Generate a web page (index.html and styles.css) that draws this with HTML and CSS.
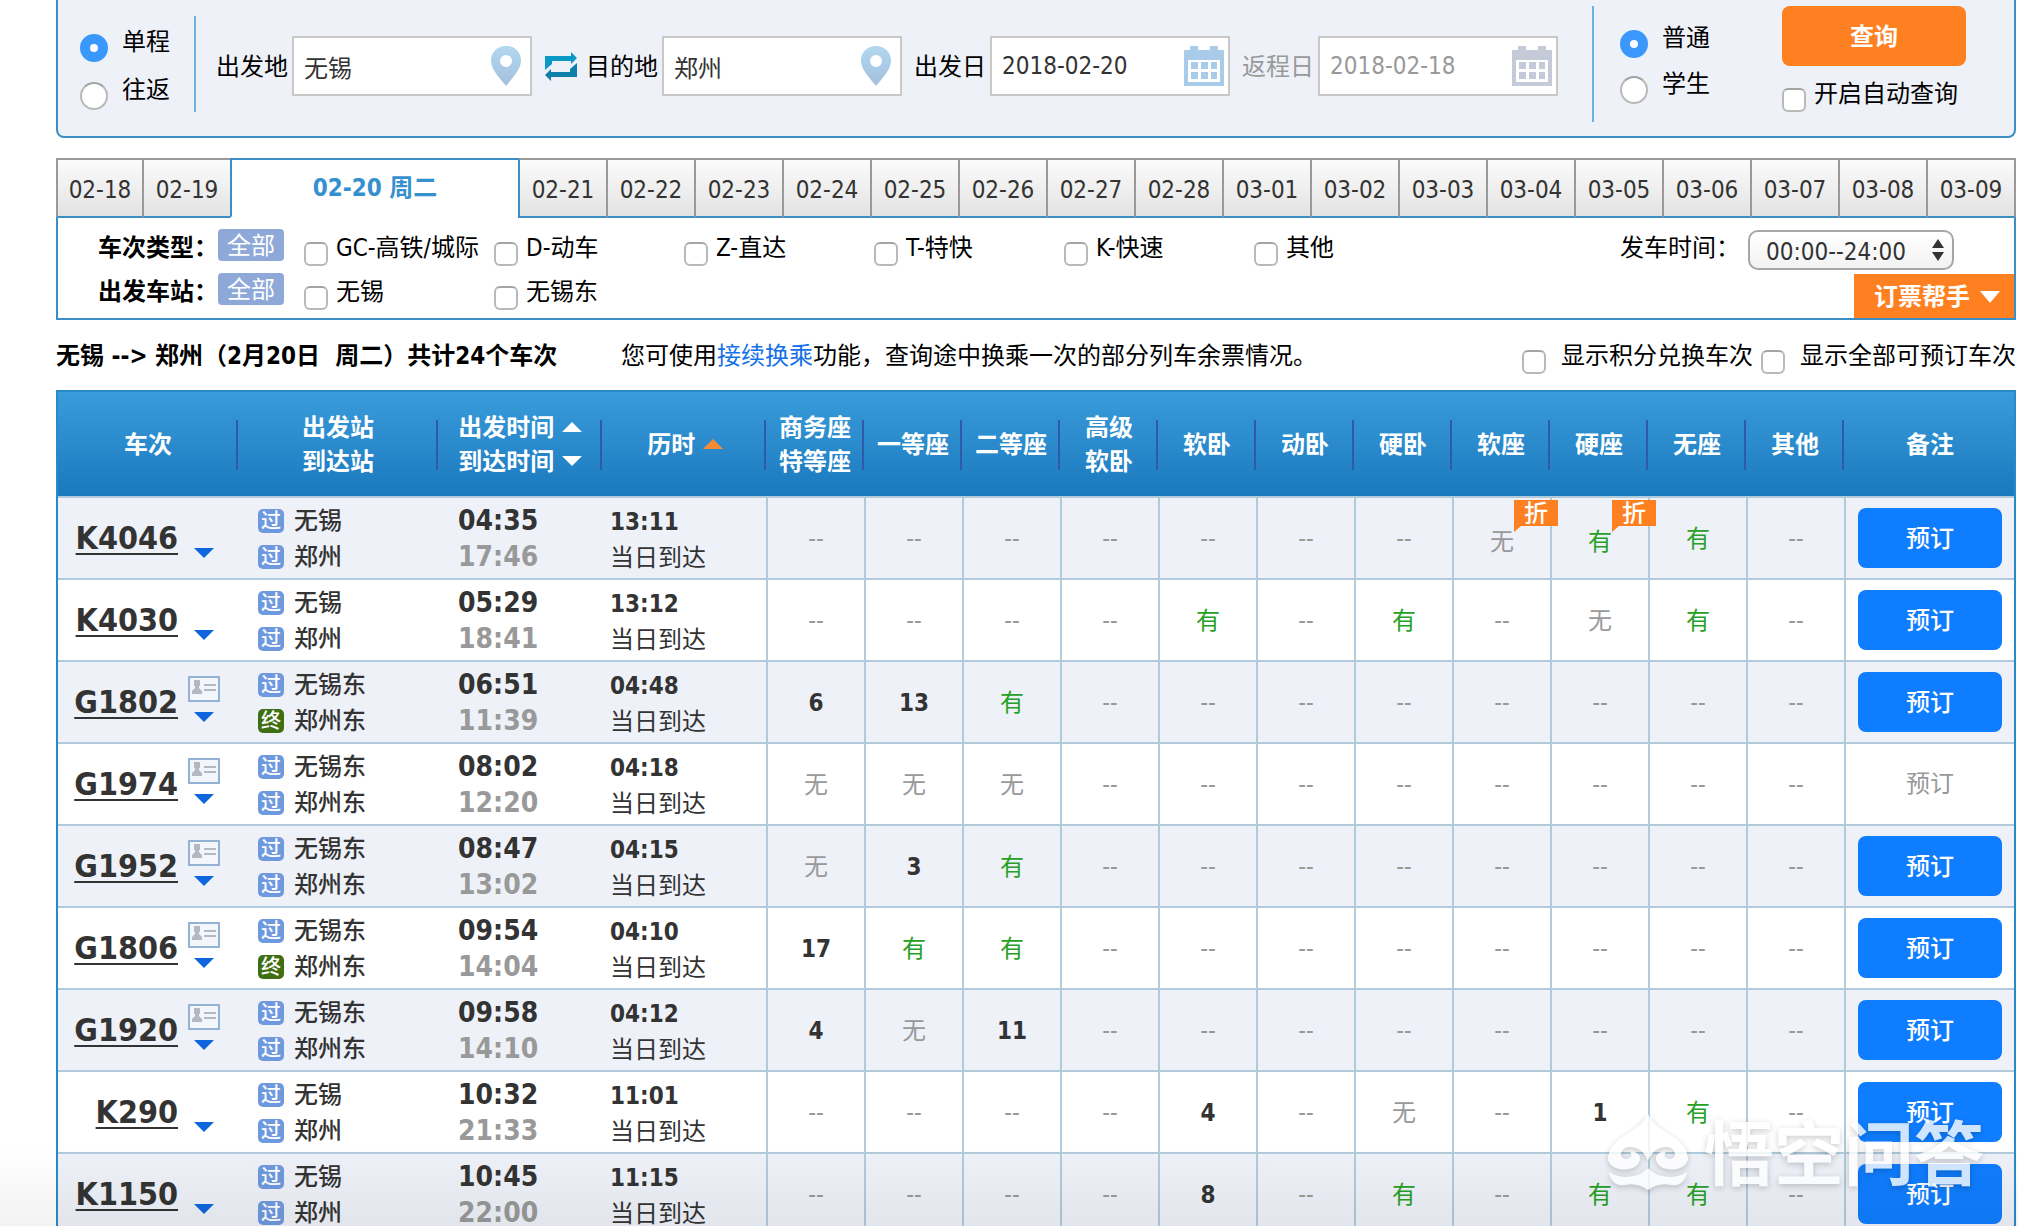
FILE: index.html
```html
<!DOCTYPE html>
<html lang="zh-CN">
<head>
<meta charset="utf-8">
<title>车票预订</title>
<link rel="stylesheet" href="styles.css">
</head>
<body>
<svg class="sprite" aria-hidden="true">
  <symbol id="pin" viewBox="0 0 32 40"><path fill="url(#tint)" fill-rule="evenodd" d="M16 0C7 0 1 6.500 1 14.500C1 22 6 28 16 40C26 28 31 22 31 14.500C31 6.500 25 0 16 0ZM16 9a6 6 0 1 1 0 12a6 6 0 1 1 0-12Z"/></symbol>
  <symbol id="calendar" viewBox="0 0 40 40"><path fill="currentColor" d="M0 4H6V0H14V4H26V0H34V4H40V40H0Z"/><path fill="#fff" d="M4 14H36V36H4Z"/><path fill="currentColor" d="M7 16h7v7H7zM17 16h7v7h-7zM27 16h6v7h-6zM7 26h7v7H7zM17 26h7v7h-7zM27 26h6v7h-6z"/></symbol>
  <symbol id="card" viewBox="0 0 32 26"><path fill="#f3f7fc" stroke="#94b2d6" stroke-width="2" d="M1 1H31V25H1Z"/><path fill="#b4b8c2" d="M6 4H12V10H11V12L14 15V18H4V15L7 12V10H6ZM16 8H28V10H16ZM16 13H28V15H16Z"/></symbol>
  <symbol id="down" viewBox="0 0 20 10"><path fill="currentColor" d="M0 0H20L10 10Z"/></symbol>
  <symbol id="up" viewBox="0 0 20 10"><path fill="currentColor" d="M0 10H20L10 0Z"/></symbol>
  <defs><linearGradient id="tint" x1="0" y1="0" x2="0" y2="1"><stop offset="0" stop-color="#b2d8f0"/><stop offset="1" stop-color="#a3bfdc"/></linearGradient></defs>
</svg>
<main class="page">
  <form class="search">
    <div class="choices trip">
      <label class="choice"><input type="radio" name="trip" checked>单程</label>
      <label class="choice"><input type="radio" name="trip">往返</label>
    </div>
    <div class="fields">
      <label for="from">出发地</label>
      <div class="field"><input id="from" type="text" value="无锡"><svg class="pin"><use href="#pin"/></svg></div>
      <button class="swap" type="button" aria-label="交换"><svg viewBox="0 0 32 30"><path fill="#0b9ac8" d="M0 5H26V1L32 7L26 13V10H7V13L0 19Z"/><path fill="#0d7fa8" d="M32 26H6V30L0 24L6 18V21H25V18L32 12Z"/></svg></button>
      <label for="to">目的地</label>
      <div class="field"><input id="to" type="text" value="郑州"><svg class="pin"><use href="#pin"/></svg></div>
      <label for="go" class="dated">出发日</label>
      <div class="field"><input id="go" type="text" value="2018-02-20"><svg class="cal"><use href="#calendar"/></svg></div>
      <label for="back" class="dated off">返程日</label>
      <div class="field off"><input id="back" type="text" value="2018-02-18"><svg class="cal"><use href="#calendar"/></svg></div>
    </div>
    <div class="choices kind">
      <label class="choice"><input type="radio" name="kind" checked>普通</label>
      <label class="choice"><input type="radio" name="kind">学生</label>
    </div>
    <div class="submit">
      <button class="query" type="button">查询</button>
      <label class="choice"><input type="checkbox">开启自动查询</label>
    </div>
  </form>

  <nav class="days">
    <a href="#">02-18</a><a href="#">02-19</a><a href="#" class="active">02-20 周二</a><a href="#">02-21</a><a href="#">02-22</a><a href="#">02-23</a><a href="#">02-24</a><a href="#">02-25</a><a href="#">02-26</a><a href="#">02-27</a><a href="#">02-28</a><a href="#">03-01</a><a href="#">03-02</a><a href="#">03-03</a><a href="#">03-04</a><a href="#">03-05</a><a href="#">03-06</a><a href="#">03-07</a><a href="#">03-08</a><a href="#">03-09</a>
  </nav>

  <section class="filters">
    <div class="filter-rows">
      <div class="filter"><strong>车次类型：</strong><button type="button" class="all">全部</button>
        <label class="choice"><input type="checkbox">GC-高铁/城际</label><label class="choice"><input type="checkbox">D-动车</label><label class="choice"><input type="checkbox">Z-直达</label><label class="choice"><input type="checkbox">T-特快</label><label class="choice"><input type="checkbox">K-快速</label><label class="choice"><input type="checkbox">其他</label></div>
      <div class="filter"><strong>出发车站：</strong><button type="button" class="all">全部</button>
        <label class="choice"><input type="checkbox">无锡</label><label class="choice"><input type="checkbox">无锡东</label></div>
    </div>
    <div class="side">
      <div class="hours"><label for="hours">发车时间：</label>
        <div class="picker"><select id="hours"><option>00:00--24:00</option></select><svg viewBox="0 0 12 22"><path fill="#333" d="M0 9L6 0L12 9ZM0 13H12L6 22Z"/></svg></div></div>
      <button type="button" class="helper">订票帮手<svg viewBox="0 0 20 12"><path fill="#fff" d="M0 0H20L10 12Z"/></svg></button>
    </div>
  </section>

  <div class="summary">
    <strong>无锡 --&gt; 郑州（2月20日&nbsp; 周二）共计24个车次</strong>
    <p>您可使用<a href="#">接续换乘</a>功能，查询途中换乘一次的部分列车余票情况。</p>
    <div class="toggles"><label class="choice"><input type="checkbox">显示积分兑换车次</label><label class="choice"><input type="checkbox">显示全部可预订车次</label></div>
  </div>

  <table class="trains">
    <colgroup><col class="c-train"><col class="c-station"><col class="c-time"><col class="c-span"><col span="11"><col class="c-book"></colgroup>
    <thead><tr>
      <th>车次</th><th>出发站<br>到达站</th><th>出发时间 <svg class="sort"><use href="#up"/></svg><br>到达时间 <svg class="sort"><use href="#down"/></svg></th><th>历时 <svg class="sort hot"><use href="#up"/></svg></th>
      <th>商务座<br>特等座</th><th>一等座</th><th>二等座</th><th>高级<br>软卧</th><th>软卧</th><th>动卧</th><th>硬卧</th><th>软座</th><th>硬座</th><th>无座</th><th>其他</th><th>备注</th>
    </tr></thead>
    <tbody>
      <tr>
        <td><div class="train"><a href="#">K4046</a><span class="tools"><svg class="more"><use href="#down"/></svg></span></div></td>
        <td><div class="station"><i>过</i>无锡</div><div class="station"><i>过</i>郑州</div></td>
        <td class="time"><b>04:35</b><b class="end">17:46</b></td>
        <td class="span"><b>13:11</b><span>当日到达</span></td>
        <td>--</td><td>--</td><td>--</td><td>--</td><td>--</td><td>--</td><td>--</td><td class="deal">无<span class="tag">折</span></td><td class="deal yes">有<span class="tag">折</span></td><td class="yes">有</td><td>--</td>
        <td><button type="button" class="book">预订</button></td>
      </tr>
      <tr>
        <td><div class="train"><a href="#">K4030</a><span class="tools"><svg class="more"><use href="#down"/></svg></span></div></td>
        <td><div class="station"><i>过</i>无锡</div><div class="station"><i>过</i>郑州</div></td>
        <td class="time"><b>05:29</b><b class="end">18:41</b></td>
        <td class="span"><b>13:12</b><span>当日到达</span></td>
        <td>--</td><td>--</td><td>--</td><td>--</td><td class="yes">有</td><td>--</td><td class="yes">有</td><td>--</td><td>无</td><td class="yes">有</td><td>--</td>
        <td><button type="button" class="book">预订</button></td>
      </tr>
      <tr>
        <td><div class="train"><a href="#">G1802</a><span class="tools"><svg class="card"><use href="#card"/></svg><svg class="more"><use href="#down"/></svg></span></div></td>
        <td><div class="station"><i>过</i>无锡东</div><div class="station"><i class="last">终</i>郑州东</div></td>
        <td class="time"><b>06:51</b><b class="end">11:39</b></td>
        <td class="span"><b>04:48</b><span>当日到达</span></td>
        <td class="num">6</td><td class="num">13</td><td class="yes">有</td><td>--</td><td>--</td><td>--</td><td>--</td><td>--</td><td>--</td><td>--</td><td>--</td>
        <td><button type="button" class="book">预订</button></td>
      </tr>
      <tr>
        <td><div class="train"><a href="#">G1974</a><span class="tools"><svg class="card"><use href="#card"/></svg><svg class="more"><use href="#down"/></svg></span></div></td>
        <td><div class="station"><i>过</i>无锡东</div><div class="station"><i>过</i>郑州东</div></td>
        <td class="time"><b>08:02</b><b class="end">12:20</b></td>
        <td class="span"><b>04:18</b><span>当日到达</span></td>
        <td>无</td><td>无</td><td>无</td><td>--</td><td>--</td><td>--</td><td>--</td><td>--</td><td>--</td><td>--</td><td>--</td>
        <td>预订</td>
      </tr>
      <tr>
        <td><div class="train"><a href="#">G1952</a><span class="tools"><svg class="card"><use href="#card"/></svg><svg class="more"><use href="#down"/></svg></span></div></td>
        <td><div class="station"><i>过</i>无锡东</div><div class="station"><i>过</i>郑州东</div></td>
        <td class="time"><b>08:47</b><b class="end">13:02</b></td>
        <td class="span"><b>04:15</b><span>当日到达</span></td>
        <td>无</td><td class="num">3</td><td class="yes">有</td><td>--</td><td>--</td><td>--</td><td>--</td><td>--</td><td>--</td><td>--</td><td>--</td>
        <td><button type="button" class="book">预订</button></td>
      </tr>
      <tr>
        <td><div class="train"><a href="#">G1806</a><span class="tools"><svg class="card"><use href="#card"/></svg><svg class="more"><use href="#down"/></svg></span></div></td>
        <td><div class="station"><i>过</i>无锡东</div><div class="station"><i class="last">终</i>郑州东</div></td>
        <td class="time"><b>09:54</b><b class="end">14:04</b></td>
        <td class="span"><b>04:10</b><span>当日到达</span></td>
        <td class="num">17</td><td class="yes">有</td><td class="yes">有</td><td>--</td><td>--</td><td>--</td><td>--</td><td>--</td><td>--</td><td>--</td><td>--</td>
        <td><button type="button" class="book">预订</button></td>
      </tr>
      <tr>
        <td><div class="train"><a href="#">G1920</a><span class="tools"><svg class="card"><use href="#card"/></svg><svg class="more"><use href="#down"/></svg></span></div></td>
        <td><div class="station"><i>过</i>无锡东</div><div class="station"><i>过</i>郑州东</div></td>
        <td class="time"><b>09:58</b><b class="end">14:10</b></td>
        <td class="span"><b>04:12</b><span>当日到达</span></td>
        <td class="num">4</td><td>无</td><td class="num">11</td><td>--</td><td>--</td><td>--</td><td>--</td><td>--</td><td>--</td><td>--</td><td>--</td>
        <td><button type="button" class="book">预订</button></td>
      </tr>
      <tr>
        <td><div class="train"><a href="#">K290</a><span class="tools"><svg class="more"><use href="#down"/></svg></span></div></td>
        <td><div class="station"><i>过</i>无锡</div><div class="station"><i>过</i>郑州</div></td>
        <td class="time"><b>10:32</b><b class="end">21:33</b></td>
        <td class="span"><b>11:01</b><span>当日到达</span></td>
        <td>--</td><td>--</td><td>--</td><td>--</td><td class="num">4</td><td>--</td><td>无</td><td>--</td><td class="num">1</td><td class="yes">有</td><td>--</td>
        <td><button type="button" class="book">预订</button></td>
      </tr>
      <tr>
        <td><div class="train"><a href="#">K1150</a><span class="tools"><svg class="more"><use href="#down"/></svg></span></div></td>
        <td><div class="station"><i>过</i>无锡</div><div class="station"><i>过</i>郑州</div></td>
        <td class="time"><b>10:45</b><b class="end">22:00</b></td>
        <td class="span"><b>11:15</b><span>当日到达</span></td>
        <td>--</td><td>--</td><td>--</td><td>--</td><td class="num">8</td><td>--</td><td class="yes">有</td><td>--</td><td class="yes">有</td><td class="yes">有</td><td>--</td>
        <td><button type="button" class="book">预订</button></td>
      </tr>
    </tbody>
  </table>
</main>
<div class="shade"></div>
<div class="watermark">
  <svg viewBox="0 0 84 76"><path fill="#fff" d="M42 0C47 10 56 16 66 22C76 28 82 36 82 46C78 58 58 58 52 50C47 44 52 36 60 38C57 41 59 45 64 45C72 44 70 33 60 33C51 33 45 39 42 47C39 39 33 33 24 33C14 33 12 44 20 45C25 45 27 41 24 38C32 36 37 44 32 50C26 58 6 58 2 46C2 36 8 28 18 22C28 16 37 10 42 0Z"/><path fill="#fff" d="M3 58C16 66 32 64 42 54C52 64 68 66 81 58C80 66 74 73 65 71C56 69 49 71 42 76C35 71 28 69 19 71C10 73 4 66 3 58Z"/></svg>
  <span>悟空问答</span>
</div>
</body>
</html>
```
FILE: styles.css
```css
* { box-sizing: border-box; }

body {
  margin: 0;
  height: 100vh;
  overflow: hidden;
  position: relative;
  background: #fff;
  color: #000;
  font: 24px/38px "DejaVu Sans Condensed", "Noto Sans CJK SC", sans-serif;
}

button, input, select { font: inherit; color: inherit; margin: 0; }
button { border: 0; padding: 0; cursor: pointer; }
a { color: inherit; text-decoration: none; }
svg { display: block; flex: none; }
.sprite { position: absolute; width: 0; height: 0; }
.page { margin: 0 2px 0 56px; }

/* radio and tick boxes */
.choice { display: flex; align-items: flex-start; white-space: nowrap; }
.choice input {
  appearance: none;
  flex: none;
  background: #fff;
  border: 2px solid #b9b9b9;
  border-top-color: #a4a4a4;
}
.choice input[type="checkbox"] { width: 24px; height: 24px; margin: 13px 8px 0 0; border-radius: 6px; }
.choice input[type="radio"] { width: 28px; height: 28px; margin: 11px 14px 0 0; border-radius: 50%; }
.choice input[type="radio"]:checked { border: 10px solid #3a98fc; }

/* search panel */
.search {
  display: flex;
  align-items: flex-start;
  height: 138px;
  background: #eef1f8;
  border: 2px solid #3b8fc4;
  border-top: 0;
  border-radius: 0 0 8px 8px;
}
.choices { display: flex; flex-direction: column; }
.trip { gap: 9px; margin-top: 16px; padding: 7px 24px 0 22px; border-right: 2px solid #6cb2dc; width: 138px; height: 96px; }
.fields { display: flex; align-items: center; height: 60px; margin: 36px 0 0 20px; white-space: nowrap; }
.fields label { padding-top: 2px; }
.field {
  display: flex;
  align-items: center;
  width: 240px;
  height: 60px;
  margin-left: 4px;
  padding: 0 8px 0 10px;
  background: #fff;
  border: 2px solid #c9c8c6;
  color: #333;
}
.field input { flex: 1; min-width: 0; height: 40px; padding: 0; border: 0; background: none; outline: 0; }
.pin { width: 32px; height: 40px; }
.cal { width: 40px; height: 40px; color: #a9cbea; margin-right: -4px; }
.swap { margin: 0 9px 0 13px; background: none; }
.swap svg { width: 32px; height: 30px; }
.dated { margin-left: 12px; }
.off { color: #999; }
.off .cal { color: #c5cad9; }
.kind { gap: 7px; margin: 6px 0 0 auto; padding: 13px 0 0 26px; border-left: 2px solid #6cb2dc; height: 116px; }
.submit { width: 184px; margin: 6px 48px 0 72px; }
.query { display: block; width: 100%; height: 60px; margin-bottom: 9px; padding-top: 2px; border-radius: 8px; background: #ff8020; color: #fff; font-weight: bold; }

/* date tabs */
.days { display: grid; grid-template-columns: 86fr 88fr 288fr repeat(16, 88fr) 90fr; margin-top: 20px; }
.days a {
  height: 60px;
  line-height: 60px;
  text-align: center;
  color: #333;
  background: linear-gradient(#fbfbfb, #e3e3e3);
  border-top: 2px solid #999;
  border-left: 2px solid #999;
  border-bottom: 2px solid #3b8fc4;
}
.days a:last-child { border-right: 2px solid #999; }
.days .active { background: #fff; border-color: #3b8fc4; border-bottom-color: #fff; color: #3590cf; font-weight: bold; line-height: 56px; }
.days .active + a { border-left-color: #3b8fc4; }

/* filters */
.filters { display: flex; justify-content: space-between; height: 102px; border: 2px solid #3b8fc4; border-top: 0; }
.filter-rows { padding: 11px 0 0 40px; }
.filter { display: flex; align-items: flex-start; height: 44px; }
.filter strong { width: 120px; white-space: nowrap; }
.all { width: 66px; height: 32px; margin-right: 20px; border-radius: 4px; background: #8ea9d8; color: #fff; line-height: 34px; }
.filter .choice { width: 190px; }
.side { display: flex; flex-direction: column; align-items: flex-end; justify-content: space-between; }
.hours { display: flex; margin: 12px 60px 0 0; }
.hours label { line-height: 36px; }
.picker { display: flex; align-items: center; width: 206px; height: 40px; margin-left: 8px; padding: 0 8px 0 16px; border: 2px solid #a6a6a6; border-radius: 10px; background: linear-gradient(#fff, #f2f2f2); color: #333; }
.picker select { appearance: none; flex: 1; min-width: 0; height: 38px; padding: 2px 0 0; border: 0; background: none; }
.picker svg { width: 12px; height: 22px; }
.helper { display: flex; align-items: center; gap: 10px; width: 160px; height: 44px; padding: 2px 0 0 20px; background: #ff8020; color: #fff; font-weight: bold; }
.helper svg { width: 20px; height: 12px; }

/* summary line */
.summary { display: flex; align-items: flex-start; height: 70px; padding-top: 17px; white-space: nowrap; }
.summary strong { width: 565px; }
.summary p { margin: 0; }
.summary p a { color: #1470e8; }
.toggles { display: flex; gap: 8px; margin-left: auto; }
.toggles .choice input { margin-right: 15px; }

/* train table */
.trains { width: 100%; table-layout: fixed; border-collapse: separate; border-spacing: 0; border: 2px solid #298ac8; color: #999; }
.c-train { width: 180px; }
.c-station { width: 200px; }
.c-time { width: 164px; }
.c-span { width: 166px; }
.c-book { width: 168px; }
.trains thead tr { background: linear-gradient(#3a9cdb, #1a78bd); }
.trains th {
  height: 106px;
  padding: 2px 0 0;
  color: #fff;
  line-height: 34px;
  white-space: nowrap;
  border-bottom: 2px solid #b0cbdc;
  background: linear-gradient(#2f5aa6, #2f5aa6) right 0 top 28px / 2px 50px no-repeat;
}
.trains th:nth-child(n+4) { background-position: right 2px top 28px; }
.trains th:nth-child(n+5) { padding-right: 4px; }
.trains th:last-child { background: none; padding-right: 0; }
.sort { display: inline-block; width: 20px; height: 10px; vertical-align: 4px; }
.hot { color: #f58b35; }
.trains td { height: 82px; padding: 2px 0 0; text-align: center; border-bottom: 2px solid #b0cbdc; border-right: 2px solid #b0cbdc; }
.trains td:nth-child(-n+3), .trains td:last-child { border-right: 0; }
.trains td:first-child, .trains td:last-child { padding: 0; }
.trains tbody tr:nth-child(odd) { background: #eef1f8; }
.train { display: flex; align-items: center; justify-content: flex-end; gap: 10px; height: 80px; padding-right: 18px; }
.train a { color: #333; font-size: 32px; font-weight: bold; text-decoration: underline; text-decoration-thickness: 2px; text-underline-offset: 4px; }
.tools { display: flex; flex-direction: column; align-items: center; justify-content: flex-end; gap: 10px; width: 32px; height: 80px; padding-bottom: 20px; }
.card { width: 32px; height: 26px; }
.more { width: 20px; height: 10px; color: #0f66dc; }
.station { display: flex; align-items: center; gap: 10px; height: 36px; padding-left: 20px; color: #333; font-weight: 500; }
.station i { width: 26px; height: 24px; border-radius: 5px; background: #6f99de; color: #fff; font-size: 20px; font-style: normal; line-height: 24px; text-align: center; }
.station .last { background: #3f6f12; }
.trains .time, .trains .span { text-align: left; color: #333; }
.time { font-size: 28px; }
.time b, .span b, .span span { display: block; height: 36px; line-height: 36px; }
.trains .time { padding-left: 20px; }
.trains .span { padding: 4px 0 0 8px; }
.time .end { color: #999; }
.trains .yes { color: #26a026; }
.trains .num { color: #333; font-weight: bold; }
.trains .deal { position: relative; padding-top: 8px; }
.tag { position: absolute; top: 2px; right: -8px; z-index: 1; width: 44px; height: 32px; background: #ff8020; color: #fff; font-weight: 500; line-height: 28px; clip-path: polygon(0 0, 100% 0, 100% 26px, 7px 26px, 0 100%); }
.book { width: 144px; height: 60px; padding-top: 2px; border-radius: 8px; background: #0f7dff; color: #fff; font-weight: 500; vertical-align: middle; }

/* overlays */
.shade { position: absolute; left: 0; right: 0; bottom: 0; height: 80px; background: linear-gradient(rgba(0, 0, 0, 0), rgba(0, 0, 0, .05)); }
.watermark { position: absolute; right: 34px; bottom: 25px; display: flex; align-items: center; gap: 14px; color: #fff; font-size: 70px; font-weight: bold; line-height: 90px; opacity: .8; filter: drop-shadow(0 2px 3px rgba(0, 0, 0, .25)); }
.watermark svg { width: 84px; height: 76px; margin-bottom: 8px; }
```
